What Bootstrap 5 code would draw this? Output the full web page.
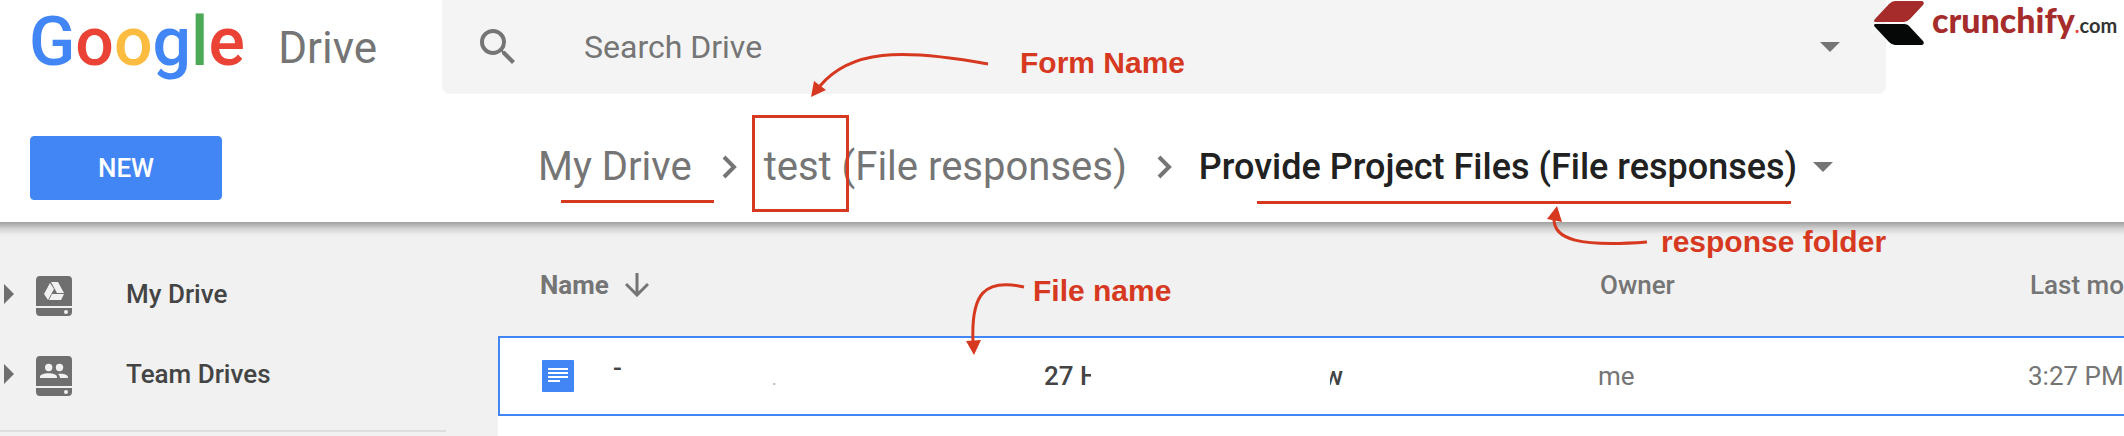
<!DOCTYPE html>
<html lang="en">
<head>
<meta charset="utf-8">
<meta name="viewport" content="width=device-width, initial-scale=1">
<title>Provide Project Files (File responses) - Google Drive</title>
<link href="https://cdn.jsdelivr.net/npm/bootstrap@5.3.0/dist/css/bootstrap.min.css" rel="stylesheet">
<style>
  :root { --drive-blue: #4285f4; --drive-gray: #757575; --note-red: #d6391f; }
  body { font-family: Roboto, "Liberation Sans", sans-serif; background: #f1f1f1; color: #444; min-height: 100vh; overflow-x: hidden; }
  a { color: inherit; text-decoration: none; }
  svg { flex: none; display: block; }

  .app-header { background: #fff; height: 222px; }
  .side-col { flex: 0 0 442px; }
  .brand { padding-left: 29px; height: 94px; }
  .g-logo { font-size: 68px; line-height: 84px; font-weight: 500; }
  .g-product { font-size: 44px; line-height: 80px; color: var(--drive-gray); margin-right: 65px; }
  .c-blue { color: #4285f4; } .c-red { color: #ea4335; } .c-yellow { color: #fbbc3f; } .c-green { color: #4caa57; }
  .search-bar { background: #f4f4f4; border-radius: 0 0 8px 8px; height: 94px; padding: 0 46px 0 32px; }
  .search-bar input { font-size: 32px; line-height: 40px; color: var(--drive-gray); outline: 0; margin-left: 62px; min-width: 0; }
  .search-bar input::placeholder { color: var(--drive-gray); opacity: 1; }
  .sponsor-col { flex: 0 0 238px; }
  .sponsor { left: -12px; top: 0; height: 46px; color: #a52c2b; font-family: Lato, sans-serif; }
  .sponsor-name { font-size: 34px; line-height: 40px; font-weight: 900; margin-left: 8px; }
  .sponsor-tld { font-size: 20px; color: #333; font-weight: 700; }

  .btn-new { --bs-btn-color: #fff; --bs-btn-bg: var(--drive-blue); --bs-btn-border-color: var(--drive-blue); --bs-btn-hover-color: #fff; --bs-btn-hover-bg: #357ae8;
    width: 192px; height: 64px; margin-left: 30px; border-radius: 4px; font-size: 26px; font-weight: 500; line-height: 32px; }
  .toolbar-row { height: 128px; padding-top: 42px; }
  .crumbs { margin-left: 96px; height: 62px; font-size: 40px; line-height: 48px; color: var(--drive-gray); white-space: nowrap; }
  .crumbs .here { font-size: 36px; font-weight: 500; color: #212121; }
  .crumb-sep { margin: 0 26px 0 30px; }

  .workspace { min-height: 214px; }
  .workspace::before { content: ""; position: absolute; inset: 0 0 auto 0; height: 16px; background: linear-gradient(#a0a0a0, #d0d0d0 40%, #ececec 75%, #f1f1f1); }
  .side-nav { flex: 0 0 498px; padding-top: 32px; }
  .side-nav a { height: 80px; padding-left: 4px; font-size: 26px; font-weight: 500; line-height: 32px; }
  .side-nav hr { width: 446px; margin: 16px 0 0; border-top: 2px solid #dedede; opacity: 1; }
  .drive-icon { margin: 4px 54px 0 22px; }

  .file-pane { min-width: 0; overflow: hidden; }
  .file-list { table-layout: fixed; width: 100%; font-size: 26px; line-height: 32px; white-space: nowrap; color: var(--drive-gray); border-collapse: separate; border-spacing: 0; }
  .file-list th { height: 114px; padding: 12px 0 0 2px; font-weight: 500; overflow: hidden; }
  .file-list th:first-child { padding-left: 42px; font-weight: 700; }
  .file-list td { height: 80px; padding: 0; background: #fff; border: solid var(--drive-blue); border-width: 2px 0; overflow: hidden; }
  .file-list td:first-child { border-left-width: 2px; padding-left: 42px; }
  .col-name { width: 1100px; } .col-owner { width: 430px; }
  .list-rest { background: #fff; min-height: 20px; box-shadow: -2px 0 #e8e8e8; }
  .piece { overflow: hidden; flex: none; color: #444; font-weight: 500; }

  .notes { left: 0; top: 0; pointer-events: none; }
  .notes text { font: 700 30px "Liberation Sans", Arial, sans-serif; fill: var(--note-red); }
</style>
</head>
<body class="position-relative">

<header class="app-header">
  <div class="d-flex">
    <a href="#" class="brand side-col d-flex align-items-start">
      <span class="g-logo"><span class="c-blue">G</span><span class="c-red">o</span><span class="c-yellow">o</span><span class="c-blue">g</span><span class="c-green">l</span><span class="c-red">e</span></span>
      <span class="g-product ms-auto pt-2">Drive</span>
    </a>
    <form class="search-bar flex-grow-1 d-flex align-items-center" role="search">
      <button type="button" class="btn p-0 border-0" aria-label="Search"><svg width="48" height="48" viewBox="0 0 24 24" fill="#757575"><path d="M15.5 14h-.79l-.28-.27A6.47 6.47 0 0 0 16 9.5 6.5 6.5 0 1 0 9.5 16c1.61 0 3.09-.59 4.23-1.57l.27.28v.79l5 4.99L20.49 19l-4.99-5zm-6 0C7.01 14 5 11.99 5 9.5S7.01 5 9.5 5 14 7.01 14 9.5 11.99 14 9.5 14z"/></svg></button>
      <input type="text" class="border-0 bg-transparent p-0 flex-grow-1" placeholder="Search Drive" aria-label="Search Drive">
      <button type="button" class="btn p-0 border-0" aria-label="Search options"><svg width="20" height="10" viewBox="0 0 20 10" fill="#757575"><path d="M0 0h20L10 10z"/></svg></button>
    </form>
    <div class="sponsor-col position-relative">
      <a href="#" class="sponsor position-absolute d-flex">
        <svg width="50" height="46" viewBox="0 0 50 46"><path d="M21 1h27q3 1 1 4L36 19q-3 3-6 3H1q-2-1 0-3L15 4q3-3 6-3z" fill="#a52c2b"/><path d="M1 24h29q4 0 6 3l13 14q2 3-1 4H21q-3 0-6-3L1 27q-2-2 0-3z" fill="#050807"/></svg>
        <span class="sponsor-name">crunchify<span class="sponsor-tld"><span class="c-red">.</span>com</span></span>
      </a>
    </div>
  </div>
  <div class="toolbar-row d-flex align-items-start">
    <div class="side-col"><button type="button" class="btn btn-new">NEW</button></div>
    <nav class="crumbs d-flex align-items-center" aria-label="Folder path">
      <a href="#">My Drive</a>
      <svg class="crumb-sep" width="16" height="24" viewBox="0 0 16 24" fill="none" stroke="#757575" stroke-width="4"><path d="M2 2l10 10L2 22"/></svg>
      <a href="#">test (File responses)</a>
      <svg class="crumb-sep" width="16" height="24" viewBox="0 0 16 24" fill="none" stroke="#757575" stroke-width="4"><path d="M2 2l10 10L2 22"/></svg>
      <a href="#" class="here">Provide Project Files (File responses)</a>
      <button type="button" class="btn p-0 border-0 ms-3" aria-label="Folder menu"><svg width="20" height="10" viewBox="0 0 20 10" fill="#757575"><path d="M0 0h20L10 10z"/></svg></button>
    </nav>
  </div>
</header>

<main class="workspace d-flex position-relative">
  <nav class="side-nav" aria-label="Drives">
    <a href="#" class="d-flex align-items-center">
      <svg width="10" height="20" viewBox="0 0 10 20" fill="#6f6f6f"><path d="M0 0l10 10L0 20z"/></svg>
      <svg class="drive-icon" width="36" height="40" viewBox="0 0 36 40"><path d="M4 0h28a4 4 0 0 1 4 4v26H0V4a4 4 0 0 1 4-4zM0 32h36v4a4 4 0 0 1-4 4H4a4 4 0 0 1-4-4z" fill="#6f6f6f"/><path d="M15 6h7l6 11h-7zM14 7l4 6-6 11-4-6zM16 18h12l-3 6H13z" fill="#f1f1f1"/><circle cx="30" cy="36" r="2" fill="#f1f1f1"/></svg>
      <span>My Drive</span>
    </a>
    <a href="#" class="d-flex align-items-center">
      <svg width="10" height="20" viewBox="0 0 10 20" fill="#6f6f6f"><path d="M0 0l10 10L0 20z"/></svg>
      <svg class="drive-icon" width="36" height="40" viewBox="0 0 36 40"><path d="M4 0h28a4 4 0 0 1 4 4v26H0V4a4 4 0 0 1 4-4zM0 32h36v4a4 4 0 0 1-4 4H4a4 4 0 0 1-4-4z" fill="#6f6f6f"/><g fill="#f1f1f1"><circle cx="12.700" cy="11.500" r="3.700"/><circle cx="23.500" cy="11.500" r="3.700"/><path d="M4 22v-1c0-5 17-5 17 0v1zM24 22c0-2-1-3-2-4 5-1 10 1 10 3v1z"/><circle cx="30" cy="36" r="2"/></g></svg>
      <span>Team Drives</span>
    </a>
    <hr>
  </nav>

  <section class="file-pane flex-grow-1" aria-label="Files">
    <table class="file-list">
      <colgroup><col class="col-name"><col class="col-owner"><col></colgroup>
      <thead>
        <tr>
          <th scope="col"><span class="d-flex align-items-center">Name <svg class="ms-3" width="24" height="24" viewBox="0 0 24 24" fill="none" stroke="#757575" stroke-width="3"><path d="M12 0v22M1 11l11 11 11-11"/></svg></span></th>
          <th scope="col">Owner</th>
          <th scope="col">Last modified</th>
        </tr>
      </thead>
      <tbody>
        <tr>
          <td>
            <div class="d-flex align-items-center">
              <svg width="32" height="32" viewBox="0 0 32 32"><rect width="32" height="32" rx="1" fill="#4285f4"/><path d="M6 9h20M6 13h20M6 17h20M6 21h12" stroke="#fff" stroke-width="2"/></svg>
              <span class="piece pb-3" style="margin-left:39px;width:12px">-</span>
              <span class="piece" style="margin-left:147px;width:8px;font-size:16px;padding-top:8px;color:#bbb">.</span>
              <span class="piece" style="margin-left:264px;width:47px">27 H</span>
              <span class="piece d-flex justify-content-end" style="margin-left:239px;width:13px">w</span>
            </div>
          </td>
          <td>me</td>
          <td>3:27 PM</td>
        </tr>
      </tbody>
    </table>
    <div class="list-rest"></div>
  </section>
</main>

<svg class="notes position-absolute" width="2124" height="436" viewBox="0 0 2124 436" fill="none" stroke="#d6391f" stroke-width="3">
  <path d="M561 201.500H714M1257 202.500H1791"/>
  <rect x="753.500" y="116.500" width="94" height="94"/>
  <path d="M988 64C900 48 850 50 820 86"/>
  <path d="M1647 242C1580 247 1553 240 1554 218"/>
  <path d="M1024 287C984 278 971 294 973 342"/>
  <g fill="#d6391f" stroke="none">
    <path d="M811 97l3-16 12 9zM1557 206l-10 13 15 3zM974 355l-8-14 15-1z"/>
  </g>
  <g stroke="none">
    <text x="1020" y="73">Form Name</text>
    <text x="1661" y="252">response folder</text>
    <text x="1033" y="301">File name</text>
  </g>
</svg>

<script src="https://cdn.jsdelivr.net/npm/bootstrap@5.3.0/dist/js/bootstrap.bundle.min.js"></script>
</body>
</html>
